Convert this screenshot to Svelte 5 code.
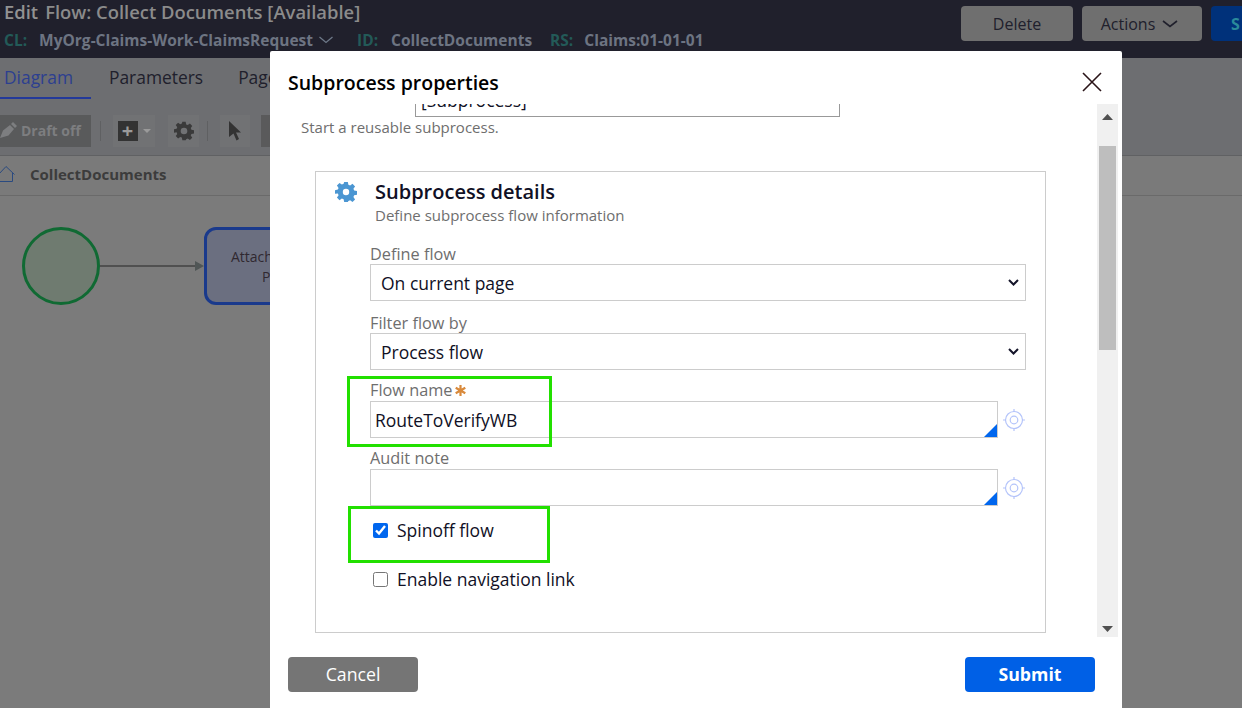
<script>
	const selects = [
		{ label: 'Define flow', value: 'On current page' },
		{ label: 'Filter flow by', value: 'Process flow' }
	];
</script>

<div class="page">
	<header class="topbar">
		<div class="top-text">
			<div class="title-row">
				<span class="edit">Edit</span>
				<span class="flow-title">Flow: Collect Documents [Available]</span>
			</div>
			<div class="meta-row">
				<span class="meta-key cl">CL:</span>
				<span class="meta-val">MyOrg-Claims-Work-ClaimsRequest</span>
				<svg class="meta-chev" width="16" height="8" viewBox="0 0 16 8"><path d="M1.5 1 8 6.5 14.500 1" fill="none" stroke="#6d7888" stroke-width="1.3" /></svg>
				<span class="meta-key id">ID:</span>
				<span class="meta-val">CollectDocuments</span>
				<span class="meta-key rs">RS:</span>
				<span class="meta-val">Claims:01-01-01</span>
			</div>
		</div>
		<div class="top-actions">
			<button class="top-btn delete">Delete</button>
			<button class="top-btn actions">
				Actions
				<svg width="16" height="8" viewBox="0 0 16 8"><path d="M1 1 8 6.500 15 1" fill="none" stroke="#20202c" stroke-width="1.6" /></svg>
			</button>
			<button class="top-btn save">S</button>
		</div>
	</header>

	<nav class="tabs">
		<span class="tab active">Diagram</span>
		<span class="tab">Parameters</span>
		<span class="tab">Pages</span>
	</nav>

	<div class="toolbar">
		<div class="draft">
			<svg width="20" height="18" viewBox="0 0 20 18"><path d="M0 17 3 9.500 10 4l4 4-5.500 6.500z M11 3l2-2 4 4-2 2z" fill="#7d7e80" /></svg>
			Draft off
		</div>
		<span class="sep"></span>
		<div class="tool add">
			<span class="plus">+</span>
			<svg width="8" height="4" viewBox="0 0 8 4"><path d="M0 0h8L4 4z" fill="#9a9a9a" /></svg>
		</div>
		<div class="tool gear">
			<svg width="20" height="20" viewBox="0 0 24 24"><path fill="#3a3a3a" fill-rule="evenodd" d="M10 1h4l.6 3.100 1.900.8 2.600-1.800 2.800 2.800-1.800 2.600.8 1.900 3.100.6v4l-3.100.6-.8 1.900 1.800 2.600-2.800 2.800-2.600-1.800-1.900.8L14 23h-4l-.6-3.100-1.900-.8-2.600 1.800-2.800-2.800 1.800-2.600-.8-1.900L0 14v-4l3.100-.6.8-1.900-1.800-2.600 2.800-2.800 2.600 1.800 1.900-.8zM12 8a4 4 0 1 0 0 8 4 4 0 0 0 0-8z" /></svg>
		</div>
		<span class="sep second"></span>
		<div class="tool pointer">
			<svg width="14" height="20" viewBox="0 0 14 20"><path d="M1 0 13 11.500 8 11.500 11 18 8.500 19.500 5.500 12.500 1 16z" fill="#333" /></svg>
		</div>
		<div class="tool dark"></div>
	</div>

	<div class="crumb">
		<svg width="16" height="18" viewBox="0 0 16 18"><path d="M-1 9 6 1.500 14.500 9.500M12.500 8v8.500H-1" fill="none" stroke="#2a4a80" stroke-width="1" /></svg>
		<span>CollectDocuments</span>
	</div>

	<div class="canvas">
		<div class="start-node"></div>
		<div class="connector"></div>
		<div class="sub-node"><span>Attach</span><span>P</span></div>
	</div>

	<div class="modal">
		<div class="modal-head">
			<h2>Subprocess properties</h2>
			<svg width="20" height="20" viewBox="0 0 20 20"><path d="M1 1 19 19M19 1 1 19" stroke="#2a1418" stroke-width="1.6" fill="none" /></svg>
		</div>

		<div class="modal-body">
			<div class="scroll-view">
				<div class="scroll-inner">
					<div class="name-row">
						<div class="name-input">[Subprocess]</div>
					</div>
					<p class="hint">Start a reusable subprocess.</p>

					<section class="details">
						<div class="details-head">
							<svg class="details-gear" width="22" height="22" viewBox="0 0 24 24"><path fill="#4b96d2" fill-rule="evenodd" d="M10 1h4l.6 3.100 1.900.8 2.600-1.800 2.800 2.800-1.800 2.600.8 1.900 3.100.6v4l-3.100.6-.8 1.900 1.800 2.600-2.800 2.800-2.600-1.800-1.900.8L14 23h-4l-.6-3.100-1.900-.8-2.600 1.800-2.800-2.800 1.800-2.600-.8-1.900L0 14v-4l3.100-.6.8-1.900-1.800-2.600 2.800-2.800 2.600 1.800 1.900-.8zM12 8.500a3.500 3.500 0 1 0 0 7 3.500 3.500 0 0 0 0-7z" /></svg>
							<div>
								<h3>Subprocess details</h3>
								<p>Define subprocess flow information</p>
							</div>
						</div>

						<div class="fields">
							{#each selects as s}
								<label class="sel-field">
									<span class="lbl">{s.label}</span>
									<span class="sel-wrap">
										<select>
											<option>{s.value}</option>
										</select>
										<svg class="sel-chev" width="11" height="7" viewBox="0 0 11 7"><path d="M1 1 5.500 5.500 10 1" fill="none" stroke="#15152a" stroke-width="2" /></svg>
									</span>
								</label>
							{/each}

							<div class="text-field first">
								<span class="lbl">Flow name<svg class="req" width="11" height="11" viewBox="0 0 11 11"><path d="M5.500 0v11M.7 2.700l9.600 5.600M.7 8.300l9.600-5.600" stroke="#d98a3c" stroke-width="2.200" /></svg></span>
								<div class="input-row">
									<div class="input">RouteToVerifyWB<i class="corner"></i></div>
									<svg class="target" width="24" height="24" viewBox="0 0 24 24"><g fill="none" stroke="#b4c4fa" stroke-width="1.2"><circle cx="12" cy="12" r="8.500" /><circle cx="12" cy="12" r="3.800" /><path d="M12 1v3M12 20v3M1 12h3M20 12h3" /></g></svg>
								</div>
							</div>

							<div class="text-field second">
								<span class="lbl">Audit note</span>
								<div class="input-row">
									<div class="input"><i class="corner"></i></div>
									<svg class="target" width="24" height="24" viewBox="0 0 24 24"><g fill="none" stroke="#b4c4fa" stroke-width="1.2"><circle cx="12" cy="12" r="8.500" /><circle cx="12" cy="12" r="3.800" /><path d="M12 1v3M12 20v3M1 12h3M20 12h3" /></g></svg>
								</div>
							</div>

							<label class="check spin"><input type="checkbox" checked /> <span>Spinoff flow</span></label>
							<label class="check nav"><input type="checkbox" /> <span>Enable navigation link</span></label>
						</div>
					</section>
				</div>
			</div>

			<div class="scrollbar">
				<svg width="11" height="6" viewBox="0 0 11 6"><path d="M5.500 0 11 6H0z" fill="#505050" /></svg>
				<div class="track"><div class="thumb"></div></div>
				<svg width="11" height="6" viewBox="0 0 11 6"><path d="M0 0h11L5.500 6z" fill="#505050" /></svg>
			</div>
		</div>

		<div class="modal-foot">
			<button class="foot-btn cancel">Cancel</button>
			<button class="foot-btn submit">Submit</button>
		</div>

		<div class="callout flow"></div>
		<div class="callout spinoff"></div>
	</div>
</div>

<style>
	:global(body) {
		margin: 0;
		font-family: 'Open Sans', sans-serif;
	}
	.page {
		position: relative;
		width: 1242px;
		height: 708px;
		overflow: hidden;
		background: #7b7b7b;
		display: flex;
		flex-direction: column;
	}
	.topbar {
		height: 58px;
		flex-shrink: 0;
		box-sizing: border-box;
		background: #20202c;
		display: flex;
		justify-content: space-between;
		padding: 0 0 0 4px;
	}
	.title-row {
		display: flex;
		gap: 7px;
		font-size: 18.4px;
		font-weight: 600;
		line-height: 24px;
		color: #8b8b8b;
	}
	.edit {
		color: #929292;
	}
	.meta-row {
		display: flex;
		align-items: center;
		font-size: 15.5px;
		font-weight: 700;
		line-height: 20px;
		margin-top: 6px;
		color: #6d7482;
	}
	.meta-key {
		color: #235a58;
	}
	.meta-key.cl {
		margin-right: 12px;
	}
	.meta-key.id {
		margin: 0 13px 0 23px;
	}
	.meta-key.rs {
		margin: 0 11px 0 18px;
	}
	.meta-chev {
		margin-left: 5px;
	}
	.top-actions {
		display: flex;
		gap: 9px;
		padding-top: 6px;
		align-items: flex-start;
	}
	.top-btn {
		height: 35px;
		border: none;
		border-radius: 4px;
		background: #6f6f6f;
		color: #20202c;
		font: 400 16px 'Open Sans', sans-serif;
		padding: 0;
	}
	.delete {
		width: 112px;
	}
	.actions {
		width: 120px;
		display: flex;
		align-items: center;
		justify-content: center;
		gap: 7px;
		padding-right: 5px;
	}
	.save {
		width: 31px;
		background: #00317a;
		color: #2a8a9a;
		text-align: left;
		padding-left: 20px;
		border-radius: 4px 0 0 4px;
		font-weight: 700;
	}
	.tabs {
		height: 42px;
		flex-shrink: 0;
		background: #6d6e71;
		display: flex;
		font-size: 17.4px;
		line-height: 38px;
		color: #20202c;
	}
	.tab {
		margin-right: 35px;
	}
	.tab.active {
		box-sizing: border-box;
		width: 91px;
		height: 41px;
		margin-right: 18px;
		padding-left: 4px;
		color: #2c3f90;
		border-bottom: 2px solid #23399a;
	}
	.toolbar {
		height: 56px;
		flex-shrink: 0;
		box-sizing: border-box;
		background: #6d6e71;
		border-bottom: 1px solid #606163;
		display: flex;
		align-items: flex-start;
		padding-top: 15px;
	}
	.draft {
		width: 91px;
		height: 32px;
		box-sizing: border-box;
		background: #595a5b;
		display: flex;
		align-items: center;
		gap: 1px;
		padding-bottom: 2px;
		font-size: 14px;
		font-weight: 700;
		color: #7d7e80;
		white-space: nowrap;
	}
	.sep {
		width: 1px;
		height: 20px;
		margin: 6px 12px 0 9px;
		background: #5f6062;
	}
	.sep.second {
		margin: 6px 12px 0 8px;
	}
	.tool {
		height: 32px;
		box-sizing: border-box;
		background: #717274;
		display: flex;
		align-items: center;
		justify-content: center;
	}
	.add {
		width: 42px;
		gap: 5px;
		margin-right: 13px;
	}
	.plus {
		width: 20px;
		height: 20px;
		background: #333;
		color: #9a9a9a;
		font-size: 20px;
		font-weight: 700;
		line-height: 19px;
		text-align: center;
	}
	.gear {
		width: 31px;
	}
	.pointer {
		width: 30px;
		margin-right: 11px;
	}
	.dark {
		width: 20px;
		background: #5a5a5b;
	}
	.crumb {
		height: 40px;
		flex-shrink: 0;
		box-sizing: border-box;
		border-bottom: 1px solid #6a6a6a;
		display: flex;
		align-items: center;
		gap: 14px;
		padding-bottom: 4px;
		font-size: 15px;
		font-weight: 700;
		color: #3c3c3c;
		background: #7a7a7a;
	}
	.canvas {
		position: relative;
		flex: 1;
	}
	.start-node {
		position: absolute;
		left: 22px;
		top: 31px;
		width: 78px;
		height: 78px;
		box-sizing: border-box;
		border: 3px solid #106a33;
		border-radius: 50%;
		background: #6f7b70;
	}
	.connector {
		position: absolute;
		left: 100px;
		top: 69px;
		width: 96px;
		height: 2px;
		background: #505050;
	}
	.connector::after {
		content: '';
		position: absolute;
		right: -8px;
		top: -4px;
		border-left: 9px solid #505656;
		border-top: 5px solid transparent;
		border-bottom: 5px solid transparent;
	}
	.sub-node {
		position: absolute;
		left: 204px;
		top: 31px;
		width: 120px;
		height: 78px;
		box-sizing: border-box;
		border: 3px solid #1a3a8c;
		border-radius: 12px;
		background: #6b6f80;
		color: #302830;
		font-size: 14px;
		line-height: 20px;
		padding: 17px 0 0 24px;
		display: flex;
		flex-direction: column;
		align-items: flex-start;
	}
	.sub-node span:last-child {
		margin-left: 31px;
	}
	.modal {
		position: absolute;
		left: 270px;
		top: 51px;
		width: 852px;
		height: 657px;
		background: #fff;
		border-radius: 2px 2px 0 0;
		display: flex;
		flex-direction: column;
		color: #101025;
	}
	.modal-head {
		height: 53px;
		flex-shrink: 0;
		display: flex;
		align-items: center;
		justify-content: space-between;
		padding: 9px 20px 0 18px;
		box-sizing: border-box;
	}
	h2 {
		margin: 0;
		font-size: 19.5px;
		font-weight: 600;
		color: #000;
	}
	.modal-body {
		height: 533px;
		flex-shrink: 0;
		display: flex;
		padding-left: 31px;
	}
	.scroll-view {
		width: 796px;
		overflow: hidden;
	}
	.scroll-inner {
		margin-top: -26px;
	}
	.name-row {
		padding-left: 114px;
	}
	.name-input {
		box-sizing: border-box;
		width: 425px;
		height: 39px;
		border: 1px solid #999;
		font-size: 17.5px;
		line-height: 43px;
		padding-left: 5px;
		color: #101025;
		overflow: hidden;
	}
	.hint {
		margin: 0;
		font-size: 15px;
		line-height: 20px;
		color: #6e6e6e;
	}
	.details {
		box-sizing: border-box;
		width: 731px;
		height: 462px;
		margin: 34px 0 0 14px;
		border: 1px solid #ccc;
	}
	.details-head {
		display: flex;
		gap: 18px;
		padding: 8px 0 0 19px;
	}
	.details-gear {
		margin-top: 1px;
	}
	h3 {
		margin: 0;
		font-size: 20px;
		line-height: 24px;
		font-weight: 600;
		color: #101025;
	}
	.details-head p {
		margin: 1px 0 0;
		font-size: 15px;
		line-height: 20px;
		color: #6e6e6e;
	}
	.fields {
		padding: 17px 0 0 54px;
		width: 656px;
		display: flex;
		flex-direction: column;
	}
	.sel-field {
		display: block;
		margin-bottom: 10px;
	}
	.lbl {
		display: block;
		height: 22px;
		font-size: 16.3px;
		line-height: 24px;
		color: #6e6e6e;
	}
	.sel-wrap {
		position: relative;
		display: block;
	}
	select {
		display: block;
		width: 656px;
		height: 37px;
		border: 1px solid #ccc;
		border-radius: 0;
		background: #fff;
		padding-left: 10px;
		font: 400 17.5px 'Open Sans', sans-serif;
		color: #101025;
		appearance: none;
	}
	.sel-chev {
		position: absolute;
		right: 7px;
		top: 15px;
		pointer-events: none;
	}
	.req {
		margin-left: 3px;
	}
	.input-row {
		display: flex;
		align-items: center;
		gap: 4px;
		margin-top: 1px;
	}
	.input {
		position: relative;
		box-sizing: border-box;
		width: 628px;
		height: 37px;
		border: 1px solid #ccc;
		font-size: 17.5px;
		line-height: 37px;
		padding-left: 4px;
		color: #101025;
	}
	.corner {
		position: absolute;
		right: 0;
		bottom: 0;
		border-left: 13px solid transparent;
		border-bottom: 13px solid #0066ee;
	}
	.text-field.first {
		margin-top: -2px;
	}
	.text-field.second {
		margin-top: 8px;
	}
	.check {
		display: flex;
		align-items: center;
		gap: 9px;
		font-size: 17.5px;
		line-height: 24px;
		color: #101025;
		padding-left: 3px;
	}
	.check input {
		width: 15px;
		height: 15px;
		margin: 0;
		accent-color: #0066ee;
	}
	.check.spin {
		margin-top: 12px;
	}
	.check.nav {
		margin-top: 25px;
	}
	.scrollbar {
		width: 21px;
		background: #f0f0f0;
		display: flex;
		flex-direction: column;
		align-items: center;
		justify-content: space-between;
		padding: 10px 0 5px;
		box-sizing: border-box;
	}
	.track {
		flex: 1;
		width: 17px;
		padding-top: 26px;
	}
	.thumb {
		height: 204px;
		background: #bebebe;
	}
	.modal-foot {
		display: flex;
		justify-content: space-between;
		padding: 20px 27px 0 18px;
	}
	.foot-btn {
		width: 130px;
		height: 35px;
		border: none;
		border-radius: 4px;
		color: #fff;
		font: 400 17.7px 'Open Sans', sans-serif;
		padding: 0 0 2px;
	}
	.cancel {
		background: #757575;
	}
	.submit {
		background: #0060e6;
		font-weight: 700;
	}
	.callout {
		position: absolute;
		box-sizing: border-box;
		border: 3px solid #22e000;
		pointer-events: none;
	}
	.callout.flow {
		left: 77px;
		top: 325px;
		width: 205px;
		height: 71px;
	}
	.callout.spinoff {
		left: 78px;
		top: 455px;
		width: 202px;
		height: 57px;
	}
</style>
